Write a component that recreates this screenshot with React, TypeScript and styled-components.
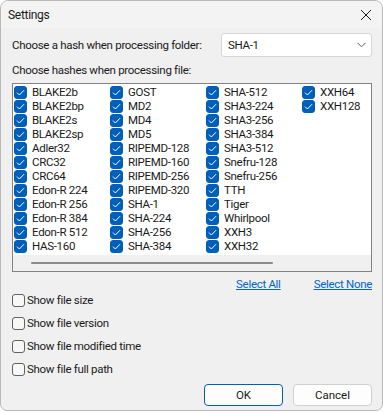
import React from "react";
import styled, { createGlobalStyle } from "styled-components";

const GlobalStyle = createGlobalStyle`
  html, body {
    margin: 0;
    padding: 0;
    background: #ffffff;
  }
  body {
    font-family: "Segoe UI", Roboto, "Liberation Sans", sans-serif;
    font-size: 11.5px;
    letter-spacing: -0.3px;
    line-height: 16px;
    color: #1a1a1a;
  }
`;

const hashColumns = [
  ["BLAKE2b", "BLAKE2bp", "BLAKE2s", "BLAKE2sp", "Adler32", "CRC32", "CRC64", "Edon-R 224", "Edon-R 256", "Edon-R 384", "Edon-R 512", "HAS-160"],
  ["GOST", "MD2", "MD4", "MD5", "RIPEMD-128", "RIPEMD-160", "RIPEMD-256", "RIPEMD-320", "SHA-1", "SHA-224", "SHA-256", "SHA-384"],
  ["SHA-512", "SHA3-224", "SHA3-256", "SHA3-384", "SHA3-512", "Snefru-128", "Snefru-256", "TTH", "Tiger", "Whirlpool", "XXH3", "XXH32"],
  ["XXH64", "XXH128"],
];

const options = ["Show file size", "Show file version", "Show file modified time", "Show file full path"];

function App() {
  return (
    <>
      <GlobalStyle />
      <Window>
        <TitleBar>
          <Title>Settings</Title>
          <CloseIcon width="12" height="12" viewBox="0 0 12 12">
            <path d="M1 1 L11 11 M11 1 L1 11" stroke="#1a1a1a" strokeWidth="1" fill="none" />
          </CloseIcon>
        </TitleBar>
        <Body>
          <FolderRow>
            <Label>Choose a hash when processing folder:</Label>
            <Combo>
              <span>SHA-1</span>
              <svg width="9" height="6" viewBox="0 0 9 6">
                <path d="M0.5 0.8 L4.5 4.8 L8.5 0.8" stroke="#606060" strokeWidth="1" fill="none" />
              </svg>
            </Combo>
          </FolderRow>
          <SectionLabel>Choose hashes when processing file:</SectionLabel>
          <ListBox>
            <HashGrid>
              {hashColumns.flat().map((name) => (
                <HashItem key={name}>
                  <CheckBox $checked>
                    <svg width="9" height="7" viewBox="0 0 9 7">
                      <path d="M1 3.6 L3.4 6 L8 1.2" stroke="#ffffff" strokeWidth="1" fill="none" />
                    </svg>
                  </CheckBox>
                  <span>{name}</span>
                </HashItem>
              ))}
            </HashGrid>
            <ScrollTrack>
              <ScrollThumb />
            </ScrollTrack>
          </ListBox>
          <LinkRow>
            <Link>Select All</Link>
            <Link>Select None</Link>
          </LinkRow>
          <OptionList>
            {options.map((o) => (
              <Option key={o}>
                <CheckBox />
                <span>{o}</span>
              </Option>
            ))}
          </OptionList>
          <ButtonRow>
            <Button $primary>OK</Button>
            <Button>Cancel</Button>
          </ButtonRow>
        </Body>
      </Window>
    </>
  );
}

export default App;

const Window = styled.div`
  width: 383px;
  height: 411px;
  box-sizing: border-box;
  border: 1px solid #b9b9b9;
  border-radius: 8px 8px 7px 7px;
  background: #f0f0f0;
  display: flex;
  flex-direction: column;
  overflow: hidden;
`;

const TitleBar = styled.div`
  height: 27px;
  display: flex;
  align-items: center;
  justify-content: space-between;
  padding: 0 10px 0 7px;
  background: #f3f3f3;
`;

const Title = styled.div`
  font-size: 12px;
  color: #1a1a1a;
`;

const CloseIcon = styled.svg`
  display: block;
`;

const Body = styled.div`
  padding: 5px 10px 0 11px;
  display: flex;
  flex-direction: column;
`;

const FolderRow = styled.div`
  display: flex;
  align-items: center;
  justify-content: space-between;
  height: 24px;
`;

const Label = styled.span`
  white-space: nowrap;
`;

const Combo = styled.div`
  width: 151px;
  height: 24px;
  box-sizing: border-box;
  background: #ffffff;
  border: 1px solid #d6d6d6;
  border-radius: 3px;
  display: flex;
  align-items: center;
  justify-content: space-between;
  padding: 0 5px 0 6px;
  svg {
    display: block;
  }
`;

const SectionLabel = styled.div`
  margin-top: 5px;
  height: 16px;
  line-height: 16px;
`;

const ListBox = styled.div`
  margin-top: 5px;
  height: 189px;
  box-sizing: border-box;
  border: 1px solid #828282;
  background: #ffffff;
  display: flex;
  flex-direction: column;
`;

const HashGrid = styled.div`
  display: grid;
  grid-auto-flow: column;
  grid-template-rows: repeat(12, 14px);
  grid-auto-columns: 96px;
  padding: 1px 0 0 1px;
  flex: 1;
`;

const HashItem = styled.div`
  display: flex;
  align-items: center;
  gap: 5px;
  white-space: nowrap;
  height: 14px;
  line-height: 14px;
`;

const CheckBox = styled.span<{ $checked?: boolean }>`
  width: 13px;
  height: 13px;
  box-sizing: border-box;
  border-radius: 3px;
  flex-shrink: 0;
  display: flex;
  align-items: center;
  justify-content: center;
  background: ${(p) => (p.$checked ? "#005fb8" : "#f7f7f7")};
  border: 1px solid ${(p) => (p.$checked ? "#005fb8" : "#616161")};
  svg {
    display: block;
  }
`;

const ScrollTrack = styled.div`
  height: 16px;
  background: #f0f0f0;
  display: flex;
  align-items: center;
  padding: 0 98px 0 18px;
`;

const ScrollThumb = styled.div`
  flex: 1;
  height: 2px;
  border-radius: 1px;
  background: #8a8a8a;
`;

const LinkRow = styled.div`
  display: flex;
  justify-content: flex-end;
  gap: 33px;
  height: 21px;
  align-items: center;
  padding-top: 1px;
`;

const Link = styled.a`
  color: #0066cc;
  text-decoration: underline;
  cursor: pointer;
`;

const OptionList = styled.div`
  display: flex;
  flex-direction: column;
  gap: 9px;
  margin-top: -1px;
`;

const Option = styled.label`
  display: flex;
  align-items: center;
  gap: 2px;
  height: 14px;
  line-height: 14px;
  white-space: nowrap;
`;

const ButtonRow = styled.div`
  display: flex;
  justify-content: flex-end;
  gap: 10px;
  margin-top: 8px;
`;

const Button = styled.button<{ $primary?: boolean }>`
  width: 79px;
  height: 22px;
  box-sizing: border-box;
  font: inherit;
  color: #1a1a1a;
  background: #fdfdfd;
  border: 1px solid ${(p) => (p.$primary ? "#005fb8" : "#d0d0d0")};
  border-radius: 4px;
  padding: 0;
`;
